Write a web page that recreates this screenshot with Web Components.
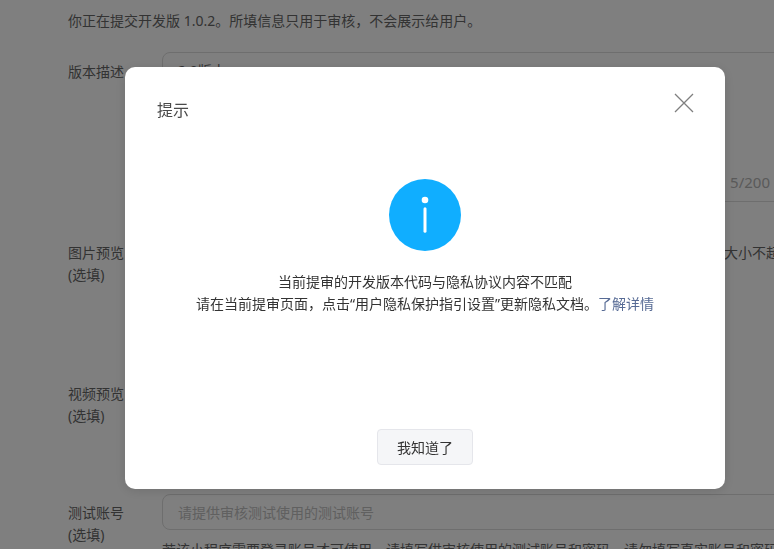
<!DOCTYPE html>
<html lang="zh"><head><meta charset="utf-8">
<style>
html,body{margin:0;padding:0;height:549px;overflow:hidden;background:#fff;font-family:"Noto Sans","Noto Sans CJK SC",sans-serif}
</style></head><body>
<template id="t-form">
<style>
:host{display:block;width:900px;height:549px;padding:0 0 0 68px;box-sizing:border-box;font-size:14px;color:#666;line-height:22px;overflow:hidden}
.intro{padding-top:10px;height:52px;box-sizing:border-box}
</style>
<div class="intro">你正在提交开发版 1.0.2。所填信息只用于审核，不会展示给用户。</div>
<slot></slot>
</template>
<template id="t-row">
<style>
:host{display:grid;grid-template-columns:94px 1fr;box-sizing:border-box;height:var(--h,auto)}
.label{padding-top:var(--lp,0)}
.label div{height:22px;white-space:nowrap}
</style>
<div class="label"><div><slot name="label"></slot></div><div><slot name="opt"></slot></div></div>
<div class="body"><slot></slot></div>
</template>
<template id="t-field">
<style>
:host{display:block;box-sizing:border-box;border:1px solid #dcdcdc;border-radius:8px;width:720px;height:var(--fh,40px);padding:7px 15px;color:var(--c,#666);position:relative}
::slotted([slot=count]){position:absolute;right:111px;bottom:8px;color:#b4b4b4;font-size:15px}
</style>
<slot></slot><slot name="count"></slot>
</template>
<template id="t-modal">
<style>
:host{position:fixed;inset:0;display:flex;align-items:flex-start;justify-content:flex-start;background:rgba(0,0,0,.5);padding:67px 0 0 125px;box-sizing:border-box;font-size:14px}
.box{width:600px;height:422px;background:#fff;border-radius:10px;box-shadow:0 2px 12px rgba(0,0,0,.12);display:flex;flex-direction:column;align-items:center;box-sizing:border-box;position:relative}
.hd{align-self:stretch;padding:32px 32px 0;font-size:16px;line-height:22px;color:#4a4a4a;height:112px;box-sizing:border-box}
.x{position:absolute;right:31px;top:26px;width:20px;height:20px;display:block}
.icon{width:72px;height:72px;display:block}
.msg{margin-top:20px;text-align:center;line-height:22px;font-size:14px;color:#333}
.msg a{color:#576b95;text-decoration:none}
.btn{margin-top:auto;margin-bottom:24px;width:96px;height:36px;box-sizing:border-box;border:1px solid #e5e6eb;border-radius:4px;background:#f5f6f8;font:14px "Noto Sans","Noto Sans CJK SC",sans-serif;color:#333;padding:0}
</style>
<div class="box">
<div class="hd">提示</div>
<svg class="x" viewBox="0 0 20 20" fill="none" stroke="#7f7f7f" stroke-width="1.3"><path d="M1 1 19 19M19 1 1 19"/></svg>
<svg class="icon" viewBox="0 0 72 72"><circle cx="36" cy="36" r="36" fill="#10aeff"/><circle cx="36" cy="21" r="3.3" fill="#fff"/><rect x="34.5" y="28.3" width="3" height="25.4" rx="1.5" fill="#fff"/></svg>
<div class="msg">当前提审的开发版本代码与隐私协议内容不匹配<br>请在当前提审页面，点击“用户隐私保护指引设置”更新隐私文档。<a>了解详情</a></div>
<button class="btn">我知道了</button>
</div>
</template>
<sub-form>
<form-row style="--h:181px;--lp:9px"><span slot="label">版本描述</span><form-field style="--fh:150px">2.0版本<span slot="count">5/200</span></form-field></form-row>
<form-row style="--h:141px;--lp:9px"><span slot="label">图片预览</span><span slot="opt">(选填)</span><div style="margin-top:9px;padding-left:562px;white-space:nowrap">大小不超过</div></form-row>
<form-row style="--h:120px;--lp:9px"><span slot="label">视频预览</span><span slot="opt">(选填)</span></form-row>
<form-row style="--lp:8px"><span slot="label">测试账号</span><span slot="opt">(选填)</span><form-field style="--c:#c0c0c0;--fh:36px">请提供审核测试使用的测试账号</form-field><div style="white-space:nowrap;margin-top:9px">若该小程序需要登录账号才可使用，请填写供审核使用的测试账号和密码，请勿填写真实账号和密码</div></form-row>
</sub-form>
<tip-modal></tip-modal>
<script>
function def(name,id){customElements.define(name,class extends HTMLElement{constructor(){super();this.attachShadow({mode:'open'}).appendChild(document.getElementById(id).content.cloneNode(true))}})}
def('sub-form','t-form');def('form-row','t-row');def('form-field','t-field');def('tip-modal','t-modal');
</script>
</body></html>
